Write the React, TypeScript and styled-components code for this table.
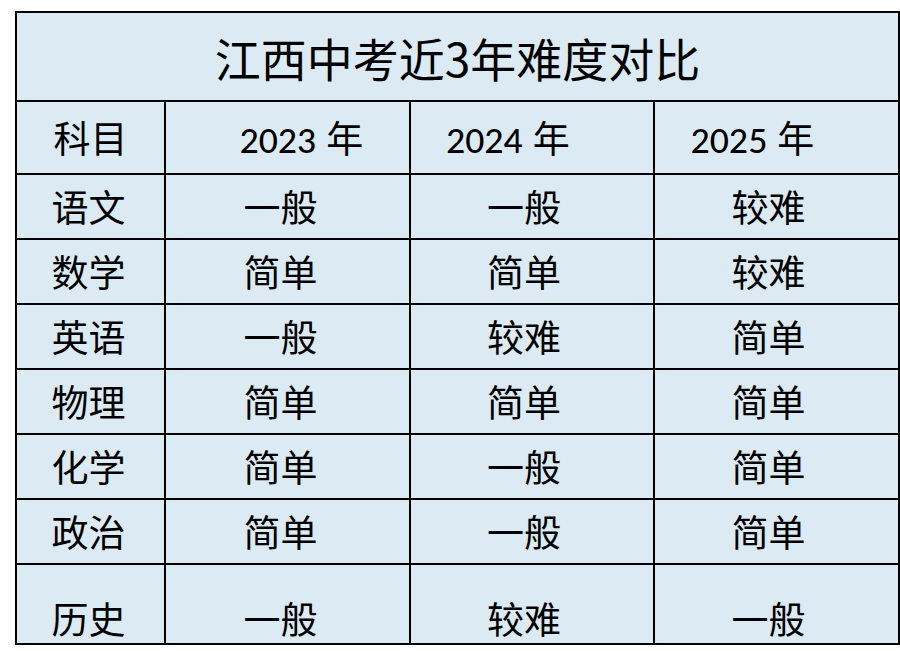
import React from "react";
import styled, { createGlobalStyle } from "styled-components";

const GlobalStyle = createGlobalStyle`
  html, body {
    margin: 0;
    padding: 0;
    background: #ffffff;
  }
  body {
    font-family: "Noto Sans CJK SC", "Noto Sans", sans-serif;
    color: #000;
  }
`;

const Page = styled.div`
  padding: 11px 0 0 15px;
`;

const Table = styled.table`
  width: 884px;
  table-layout: fixed;
  border-collapse: collapse;
  background-color: #dcebf3;
`;

const TitleCell = styled.th`
  height: 87px;
  padding: 0;
  border: 2px solid #000;
  font-size: 46px;
  font-weight: 400;
  text-align: center;
  vertical-align: middle;
  line-height: 1;
`;

const HeadCell = styled.td<{ $shift?: number }>`
  height: 71px;
  padding: 0;
  padding-left: ${(p) => (p.$shift && p.$shift > 0 ? p.$shift : 0)}px;
  padding-right: ${(p) => (p.$shift && p.$shift < 0 ? -p.$shift : 0)}px;
  border: 2px solid #000;
  text-align: center;
  vertical-align: middle;
  font-size: 37px;
  line-height: 1;
`;

const Year = styled.span`
  font-family: "Lato", "Liberation Sans", sans-serif;
  font-size: 33px;
  font-weight: 500;
  margin-right: 10px;
`;

const Cell = styled.td<{ $tall?: boolean }>`
  box-sizing: border-box;
  height: ${(p) => (p.$tall ? 80 : 65)}px;
  padding: 0 16px 0 0;
  padding-bottom: ${(p) => (p.$tall ? 6 : 0)}px;
  border: 2px solid #000;
  text-align: center;
  vertical-align: ${(p) => (p.$tall ? "bottom" : "middle")};
  font-size: 37px;
  line-height: 1;
`;

const SubjectCell = styled(Cell)`
  padding-right: 4px;
`;

const FirstCell = styled(Cell)`
  padding-right: 14px;
`;

const rows: [string, string, string, string][] = [
  ["语文", "一般", "一般", "较难"],
  ["数学", "简单", "简单", "较难"],
  ["英语", "一般", "较难", "简单"],
  ["物理", "简单", "简单", "简单"],
  ["化学", "简单", "一般", "简单"],
  ["政治", "简单", "一般", "简单"],
  ["历史", "一般", "较难", "一般"],
];

const App = () => {
  return (
    <Page>
      <GlobalStyle />
      <Table>
        <colgroup>
          <col style={{ width: 149 }} />
          <col style={{ width: 245 }} />
          <col style={{ width: 244 }} />
          <col style={{ width: 245 }} />
        </colgroup>
        <thead>
          <tr>
            <TitleCell colSpan={4}>江西中考近3年难度对比</TitleCell>
          </tr>
        </thead>
        <tbody>
          <tr>
            <HeadCell>科目</HeadCell>
            <HeadCell $shift={28}>
              <Year>2023</Year>年
            </HeadCell>
            <HeadCell $shift={-48}>
              <Year>2024</Year>年
            </HeadCell>
            <HeadCell $shift={-48}>
              <Year>2025</Year>年
            </HeadCell>
          </tr>
          {rows.map((r, idx) => {
            const tall = idx === rows.length - 1;
            return (
              <tr key={r[0]}>
                <SubjectCell $tall={tall}>{r[0]}</SubjectCell>
                <FirstCell $tall={tall}>{r[1]}</FirstCell>
                <Cell $tall={tall}>{r[2]}</Cell>
                <Cell $tall={tall}>{r[3]}</Cell>
              </tr>
            );
          })}
        </tbody>
      </Table>
    </Page>
  );
};

export default App;
